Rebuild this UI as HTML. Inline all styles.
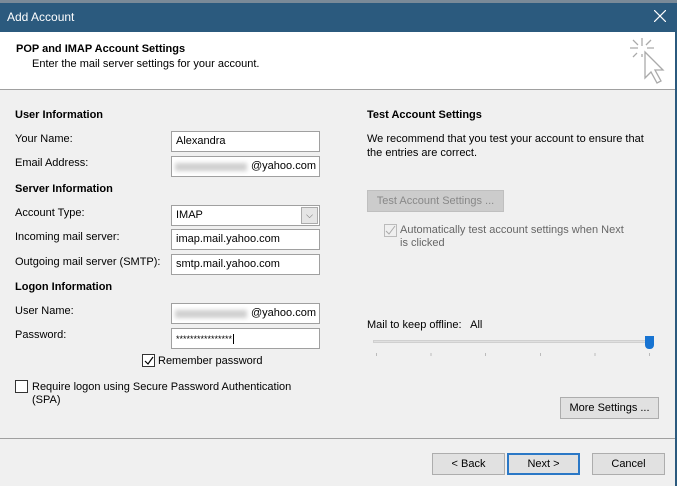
<!DOCTYPE html>
<html><head><style>
*{margin:0;padding:0;box-sizing:border-box}
body{width:677px;height:486px;overflow:hidden;background:#f0f0f0;font-family:"Liberation Sans",sans-serif;font-size:11px;color:#000;position:relative}
.a{position:absolute;white-space:nowrap}
.b{font-weight:bold}
.in{position:absolute;background:#fff;border:1px solid #a0a0a0;height:21px;padding:3px 0 0 4px;font-size:11px}
.btn{position:absolute;background:#e1e1e1;border:1px solid #adadad;height:22px;text-align:center;padding-top:4px;font-size:11px}
.cb{position:absolute;width:13px;height:13px;border:1px solid #333;background:#fff}
.blur{position:absolute;height:8px;background:#cfcfcf;filter:blur(2px)}
</style></head><body>
<div class="a" style="left:0;top:0;width:677px;height:4px;background:#7a8a98"></div>
<div class="a" style="left:0;top:3px;width:677px;height:29px;background:#2b5a7e"></div>
<div class="a" style="left:7px;top:10px;color:#fff;font-size:12px">Add Account</div>
<svg class="a" style="left:654px;top:10px" width="12" height="12"><path d="M0 0L12 12M12 0L0 12" stroke="#fff" stroke-width="1.2"/></svg>
<div class="a" style="left:0;top:32px;width:675px;height:57px;background:#fff"></div>
<div class="a" style="left:0;top:89px;width:675px;height:1px;background:#a0a0a0"></div>
<div class="a" style="left:675px;top:32px;width:2px;height:454px;background:#2b5a7e"></div>
<div class="a b" style="left:16px;top:43px">POP and IMAP Account Settings</div>
<div class="a" style="left:32px;top:58px">Enter the mail server settings for your account.</div>
<svg class="a" style="left:626px;top:36px" width="40" height="52" viewBox="0 0 40 52"><g stroke="#aaa" stroke-width="1.3" fill="none"><path d="M16 2v8M16 18v3M4 12h8M21 12h7M7 4l5 5M25 4l-5 5M7 21l4-4"/><path d="M19 16v26l6-6 6 11 4-2-6-11 8 0z" fill="#fff"/></g></svg>
<div class="a b" style="left:15px;top:109px">User Information</div>
<div class="a" style="left:15px;top:133px">Your Name:</div>
<div class="in" style="left:171px;top:131px;width:149px">Alexandra</div>
<div class="a" style="left:15px;top:157px">Email Address:</div>
<div class="in" style="left:171px;top:156px;width:149px;text-align:right;padding-right:3px">@yahoo.com</div>
<div class="blur" style="left:175px;top:163px;width:72px"></div>
<div class="a b" style="left:15px;top:183px">Server Information</div>
<div class="a" style="left:15px;top:207px">Account Type:</div>
<div class="in" style="left:171px;top:205px;width:149px">IMAP</div>
<div class="a" style="left:301px;top:207px;width:17px;height:17px;background:#e5e5e5;border:1px solid #aaa;font-size:9px;text-align:center;line-height:15px;color:#555">⌵</div>
<div class="a" style="left:15px;top:231px">Incoming mail server:</div>
<div class="in" style="left:171px;top:229px;width:149px">imap.mail.yahoo.com</div>
<div class="a" style="left:15px;top:256px">Outgoing mail server (SMTP):</div>
<div class="in" style="left:171px;top:254px;width:149px">smtp.mail.yahoo.com</div>
<div class="a b" style="left:15px;top:281px">Logon Information</div>
<div class="a" style="left:15px;top:305px">User Name:</div>
<div class="in" style="left:171px;top:303px;width:149px;text-align:right;padding-right:3px">@yahoo.com</div>
<div class="blur" style="left:175px;top:310px;width:72px"></div>
<div class="a" style="left:15px;top:329px">Password:</div>
<div class="in" style="left:171px;top:328px;width:149px;font-size:9px;padding-top:5px">****************<span style="border-left:1px solid #000;margin-left:1px"></span></div>
<div class="cb" style="left:142px;top:354px"></div>
<svg class="a" style="left:143px;top:355px" width="11" height="11"><path d="M2 6l3 3 5-7" stroke="#000" fill="none" stroke-width="1.2"/></svg>
<div class="a" style="left:158px;top:355px">Remember password</div>
<div class="cb" style="left:15px;top:380px"></div>
<div class="a" style="left:32px;top:381px;line-height:13px">Require logon using Secure Password Authentication<br>(SPA)</div>
<div class="a b" style="left:367px;top:109px">Test Account Settings</div>
<div class="a" style="left:367px;top:132px;line-height:14px">We recommend that you test your account to ensure that<br>the entries are correct.</div>
<div class="btn" style="left:367px;top:190px;width:137px;background:#ccc;border-color:#bfbfbf;color:#888">Test Account Settings ...</div>
<svg class="a" style="left:384px;top:224px" width="13" height="13"><rect x=".5" y=".5" width="12" height="12" fill="none" stroke="#bbb"/><path d="M2 7l3 3 6-8" stroke="#aaa" fill="none"/></svg>
<div class="a" style="left:400px;top:224px;color:#666;line-height:13px">Automatically test account settings when Next<br>is clicked</div>
<div class="a" style="left:367px;top:319px">Mail to keep offline:&nbsp;&nbsp; All</div>
<div class="a" style="left:373px;top:340px;width:277px;height:3px;background:#e0e0e0;border:1px solid #d0d0d0"></div>
<div class="a" style="left:645px;top:336px;width:9px;height:13px;background:#1874d2;border-radius:0 0 4px 4px"></div>
<div class="a" style="left:376px;top:353px;width:274px;height:3px;background:repeating-linear-gradient(90deg,#bbb 0 1px,transparent 1px 54.6px)"></div>
<div class="btn" style="left:560px;top:397px;width:99px">More Settings ...</div>
<div class="a" style="left:0;top:438px;width:675px;height:1px;background:#a0a0a0"></div>
<div class="btn" style="left:432px;top:453px;width:73px">&lt; Back</div>
<div class="btn" style="left:507px;top:453px;width:73px;border:2px solid #2b78c6;padding-top:3px">Next &gt;</div>
<div class="btn" style="left:592px;top:453px;width:73px">Cancel</div>
</body></html>
